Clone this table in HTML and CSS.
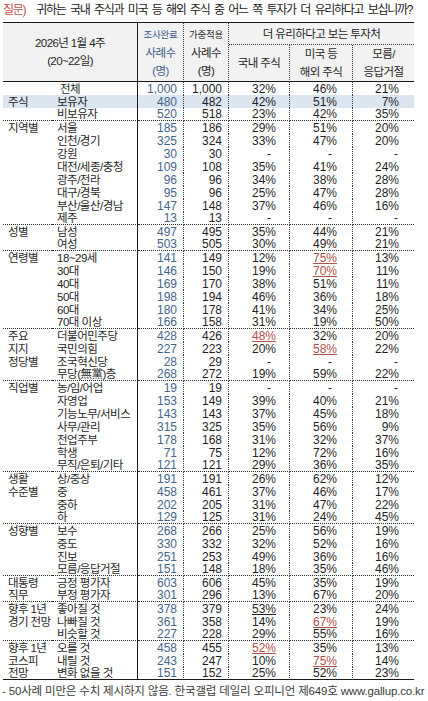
FILE: index.html
```html
<!DOCTYPE html>
<html lang="ko">
<head>
<meta charset="utf-8">
<title>국내 주식 vs 해외 주식</title>
<link rel="stylesheet" href="styles.css">
</head>
<body>
<div class="page">
  <p class="title"><span class="q">질문)</span><span class="qt">귀하는 국내 주식과 미국 등 해외 주식 중 어느 쪽 투자가 더 유리하다고 보십니까?</span></p>
  <table class="poll">
    <colgroup>
      <col class="c-grp"><col class="c-sub"><col class="c-n1"><col class="c-n2"><col class="c-p1"><col class="c-p2"><col class="c-p3">
    </colgroup>
    <thead>
      <tr class="h1">
        <th colspan="2" rowspan="2" class="h-date">2026년 1월 4주<br>(20~22일)</th>
        <th rowspan="2" class="h-n h-n1"><span class="small">조사완료</span><br>사례수<br>(명)</th>
        <th rowspan="2" class="h-n h-n2"><span class="small">가중적용</span><br>사례수<br>(명)</th>
        <th colspan="3" class="h-q">더 유리하다고 보는 투자처</th>
      </tr>
      <tr class="h2">
        <th class="h-p">국내 주식</th>
        <th class="h-p">미국 등<br>해외 주식</th>
        <th class="h-p">모름/<br>응답거절</th>
      </tr>
    </thead>
    <tbody>
      <tr><td colspan="2" class="total">전체</td><td>1,000</td><td>1,000</td><td>32%</td><td>46%</td><td>21%</td></tr>
      <tr class="hilite"><td>주식</td><td>보유자</td><td>480</td><td>482</td><td>42%</td><td>51%</td><td>7%</td></tr>
      <tr class="sep"><td></td><td>비보유자</td><td>520</td><td>518</td><td>23%</td><td>42%</td><td>35%</td></tr>

      <tr><td>지역별</td><td>서울</td><td>185</td><td>186</td><td>29%</td><td>51%</td><td>20%</td></tr>
      <tr><td></td><td>인천/경기</td><td>325</td><td>324</td><td>33%</td><td>47%</td><td>20%</td></tr>
      <tr class="na"><td></td><td>강원</td><td>30</td><td>30</td><td>-</td><td>-</td><td>-</td></tr>
      <tr><td></td><td>대전/세종/충청</td><td>109</td><td>108</td><td>35%</td><td>41%</td><td>24%</td></tr>
      <tr><td></td><td>광주/전라</td><td>96</td><td>96</td><td>34%</td><td>38%</td><td>28%</td></tr>
      <tr><td></td><td>대구/경북</td><td>95</td><td>96</td><td>25%</td><td>47%</td><td>28%</td></tr>
      <tr><td></td><td>부산/울산/경남</td><td>147</td><td>148</td><td>37%</td><td>46%</td><td>16%</td></tr>
      <tr class="sep na"><td></td><td>제주</td><td>13</td><td>13</td><td>-</td><td>-</td><td>-</td></tr>

      <tr><td>성별</td><td>남성</td><td>497</td><td>495</td><td>35%</td><td>44%</td><td>21%</td></tr>
      <tr class="sep"><td></td><td>여성</td><td>503</td><td>505</td><td>30%</td><td>49%</td><td>21%</td></tr>

      <tr><td>연령별</td><td>18~29세</td><td>141</td><td>149</td><td>12%</td><td><span class="hl">75%</span></td><td>13%</td></tr>
      <tr><td></td><td>30대</td><td>146</td><td>150</td><td>19%</td><td><span class="hl">70%</span></td><td>11%</td></tr>
      <tr><td></td><td>40대</td><td>169</td><td>170</td><td>38%</td><td>51%</td><td>11%</td></tr>
      <tr><td></td><td>50대</td><td>198</td><td>194</td><td>46%</td><td>36%</td><td>18%</td></tr>
      <tr><td></td><td>60대</td><td>180</td><td>178</td><td>41%</td><td>34%</td><td>25%</td></tr>
      <tr class="sep"><td></td><td>70대 이상</td><td>166</td><td>158</td><td>31%</td><td>19%</td><td>50%</td></tr>

      <tr><td>주요</td><td>더불어민주당</td><td>428</td><td>426</td><td><span class="hl">48%</span></td><td>32%</td><td>20%</td></tr>
      <tr><td>지지</td><td>국민의힘</td><td>227</td><td>223</td><td>20%</td><td><span class="hl">58%</span></td><td>22%</td></tr>
      <tr class="na"><td>정당별</td><td>조국혁신당</td><td>28</td><td>29</td><td>-</td><td>-</td><td>-</td></tr>
      <tr class="sep"><td></td><td>무당(無黨)층</td><td>268</td><td>272</td><td>19%</td><td>59%</td><td>22%</td></tr>

      <tr class="na"><td>직업별</td><td>농/임/어업</td><td>19</td><td>19</td><td>-</td><td>-</td><td>-</td></tr>
      <tr><td></td><td>자영업</td><td>153</td><td>149</td><td>39%</td><td>40%</td><td>21%</td></tr>
      <tr><td></td><td>기능노무/서비스</td><td>143</td><td>143</td><td>37%</td><td>45%</td><td>18%</td></tr>
      <tr><td></td><td>사무/관리</td><td>315</td><td>325</td><td>35%</td><td>56%</td><td>9%</td></tr>
      <tr><td></td><td>전업주부</td><td>178</td><td>168</td><td>31%</td><td>32%</td><td>37%</td></tr>
      <tr><td></td><td>학생</td><td>71</td><td>75</td><td>12%</td><td>72%</td><td>16%</td></tr>
      <tr class="sep"><td></td><td>무직/은퇴/기타</td><td>121</td><td>121</td><td>29%</td><td>36%</td><td>35%</td></tr>

      <tr><td>생활</td><td>상/중상</td><td>191</td><td>191</td><td>26%</td><td>62%</td><td>12%</td></tr>
      <tr><td>수준별</td><td>중</td><td>458</td><td>461</td><td>37%</td><td>46%</td><td>17%</td></tr>
      <tr><td></td><td>중하</td><td>202</td><td>205</td><td>31%</td><td>47%</td><td>22%</td></tr>
      <tr class="sep"><td></td><td>하</td><td>129</td><td>125</td><td>31%</td><td>24%</td><td>45%</td></tr>

      <tr><td>성향별</td><td>보수</td><td>268</td><td>266</td><td>25%</td><td>56%</td><td>19%</td></tr>
      <tr><td></td><td>중도</td><td>330</td><td>332</td><td>32%</td><td>52%</td><td>16%</td></tr>
      <tr><td></td><td>진보</td><td>251</td><td>253</td><td>49%</td><td>36%</td><td>16%</td></tr>
      <tr class="sep"><td></td><td>모름/응답거절</td><td>151</td><td>148</td><td>18%</td><td>35%</td><td>46%</td></tr>

      <tr><td>대통령</td><td>긍정 평가자</td><td>603</td><td>606</td><td>45%</td><td>35%</td><td>19%</td></tr>
      <tr class="sep"><td>직무</td><td>부정 평가자</td><td>301</td><td>296</td><td>13%</td><td>67%</td><td>20%</td></tr>

      <tr><td>향후 1년</td><td>좋아질 것</td><td>378</td><td>379</td><td><span class="ul">53%</span></td><td>23%</td><td>24%</td></tr>
      <tr><td>경기 전망</td><td>나빠질 것</td><td>361</td><td>358</td><td>14%</td><td><span class="hl">67%</span></td><td>19%</td></tr>
      <tr class="sep"><td></td><td>비슷할 것</td><td>227</td><td>228</td><td>29%</td><td>55%</td><td>16%</td></tr>

      <tr><td>향후 1년</td><td>오를 것</td><td>458</td><td>455</td><td><span class="hl">52%</span></td><td>35%</td><td>13%</td></tr>
      <tr><td>코스피</td><td>내릴 것</td><td>243</td><td>247</td><td>10%</td><td><span class="hl">75%</span></td><td>14%</td></tr>
      <tr class="end"><td>전망</td><td>변화 없을 것</td><td>151</td><td>152</td><td>25%</td><td>52%</td><td>23%</td></tr>
    </tbody>
  </table>
  <p class="note">- 50사례 미만은 수치 제시하지 않음. 한국갤럽 데일리 오피니언 제649호 www.gallup.co.kr</p>
</div>
</body>
</html>
```

FILE: styles.css
```css
* { box-sizing: border-box; }

body {
  margin: 0;
  background: #ffffff;
  color: #1f1f1f;
  font-family: "Liberation Sans", "Noto Sans CJK KR", sans-serif;
}

.page {
  width: 428px;
}

/* ---------- title ---------- */
.title {
  margin: 0;
  height: 22px;
  padding-left: 3px;
  font-size: 12px;
  line-height: 21px;
  letter-spacing: -1.3px;
  word-spacing: 2.5px;
  white-space: nowrap;
  color: #1a1a1a;
}
.title .q {
  color: #c0504d;
}
.title .qt {
  margin-left: 11px;
}

/* ---------- table ---------- */
.poll {
  width: 411px;
  margin-left: 3px;
  border-collapse: separate;
  border-spacing: 0;
  table-layout: fixed;
}
.c-grp { width: 49px; }
.c-sub { width: 86px; }
.c-n1  { width: 46px; }
.c-n2  { width: 45px; }
.c-p1  { width: 61px; }
.c-p2  { width: 63px; }
.c-p3  { width: 61px; }

/* header */
.poll th {
  background: #f2f2f2;
  font-weight: normal;
  font-size: 11.5px;
  line-height: 18px;
  letter-spacing: -0.6px;
  text-align: center;
  vertical-align: middle;
  padding: 0;
  color: #1f1f1f;
  white-space: nowrap;
}
.poll tr.h1 { height: 23px; }
.poll tr.h2 { height: 34px; }
.poll tr.h1 th { border-top: 1px solid #1a1a1a; }
.h-date, .h-n, .h-p { border-bottom: 1px solid #1a1a1a; }
.h-date { border-right: 1px solid #1a1a1a; padding-bottom: 1px; }
.h-n { border-right: 1px dotted #3a3a3a; }
.poll th.h-n1 { color: #3c5b86; }
.small { font-size: 9.5px; letter-spacing: -0.3px; }
.h-q {
  border-bottom: 1px dotted #3a3a3a;
  padding-left: 6px;
}
.h-p { padding-bottom: 3px; }
.h2 .h-p:not(:last-child) { border-right: 1px dotted #3a3a3a; }

/* body */
.poll tbody tr { height: 13px; }
.poll td {
  padding: 0;
  font-size: 12px;
  line-height: 12px;
  vertical-align: middle;
  white-space: nowrap;
  overflow: visible;
}
.poll td:nth-last-child(7) {
  padding-left: 5px;
  font-size: 11.5px;
  letter-spacing: -0.6px;
}
.poll td:nth-last-child(6) {
  padding-left: 5px;
  font-size: 11.5px;
  letter-spacing: -0.5px;
  border-right: 1px solid #1a1a1a;
}
.poll td.total {
  padding-left: 0;
  text-align: center;
}
.poll td:nth-last-child(5) {
  text-align: right;
  padding-right: 6px;
  color: #44658b;
  border-right: 1px dotted #3a3a3a;
}
.poll td:nth-last-child(4) {
  text-align: right;
  padding-right: 6px;
  border-right: 1px dotted #3a3a3a;
}
.poll td:nth-last-child(3) {
  text-align: right;
  padding-right: 13px;
  border-right: 1px dotted #3a3a3a;
}
.poll td:nth-last-child(2) {
  text-align: right;
  padding-right: 15px;
  border-right: 1px dotted #3a3a3a;
}
.poll td:nth-last-child(1) {
  text-align: right;
  padding-right: 15px;
}
.poll tr.na td:nth-last-child(3) { padding-right: 18px; }
.poll tr.na td:nth-last-child(2) { padding-right: 20px; }
.poll tr.na td:nth-last-child(1) { padding-right: 16px; }

.poll tr.hilite td { background: #dce6f1; }
.poll tr.sep td { border-bottom: 1px dotted #2a2a2a; }
.poll tr.end td { border-bottom: 1px solid #1a1a1a; }

.hl {
  color: #b0504c;
  text-decoration: underline;
  text-underline-offset: 1px;
}
.ul {
  text-decoration: underline;
  text-underline-offset: 1px;
}

/* footer note */
.note {
  margin: 0;
  padding-left: 2px;
  font-size: 11.5px;
  line-height: 22px;
  letter-spacing: -0.17px;
  color: #3a3a3a;
  white-space: nowrap;
}
```
